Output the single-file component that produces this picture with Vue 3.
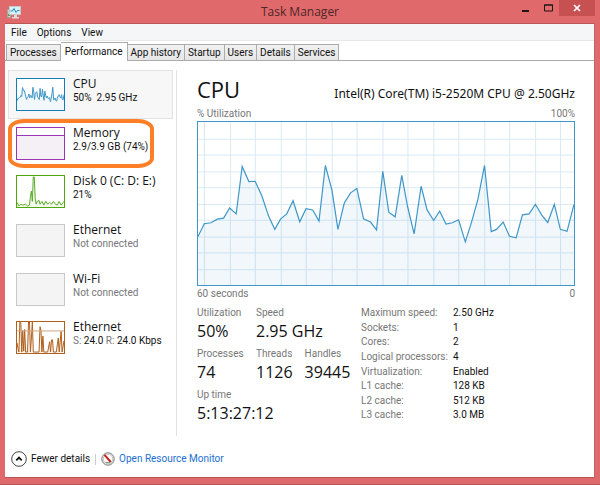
<script setup>
import { ref } from 'vue'

const menus = ['File', 'Options', 'View']
const tabs = ['Processes', 'Performance', 'App history', 'Startup', 'Users', 'Details', 'Services']
const activeTab = ref('Performance')

const cpuLine =
  '0,116 6.3,103 13,102 19.3,98.3 25.7,97.3 31.7,87 38.3,93 44.3,45 51,60.3 57.3,60 64,74.7 70.7,95 77,108.7 82.7,98.3 89,93 95.3,79.7 102,101 108.3,87.7 115,89 121.3,100.3 127.7,44 134.3,69 140.3,108.7 146.7,82 153,71.7 159.3,67.3 166,98 173,101.3 179,109.3 185.3,50 191.3,91.3 197.7,96 204.3,54 210.3,86.3 216.7,113.3 223.7,65 229.7,89 236.3,99.7 242.3,90.3 248.7,103.3 255,102 261.3,99 268,121.3 274.3,101.3 280.7,78 287.3,44 294,111 299.3,108.7 306,101.3 312.3,115.7 319,117.3 325.3,94 332,93 338.3,83.3 344.7,94.3 350.7,101.7 357.3,83.3 363.3,108.7 370,110.7 377,83.3'
const diskLine =
  '0,28 2,32 4,30 6,31 9,30 11,32 13,31 14,22 15,16 16,27 17,1 18,1 19,24 20,30 21,27 23,26 24,30 26,27 28,31 30,27 32,30 34,28 36,30 38,27 40,30 42,31 44,27 46,31 49,27'
const netLine =
  '0,22 1,28 2,32 3,0 4,1 5,32 6,9 7,31 8,8 9,32 11,32 12,0 13,0 14,32 15,17 16,0 17,32 21,32 23,32 24,5 25,9 26,32 27,15 28,32 32,32 34,21 35,32 36,19 37,19 38,32 41,32 43,17 44,32 46,10 47,32 49,20'

const items = [
  { name: 'CPU', info: '50%  2.95 GHz', tone: 'cpu', line: cpuLine, box: '0 0 377 165', base: '377,165 0,165' },
  { name: 'Memory', info: '2.9/3.9 GB (74%)', tone: 'memory', line: '0,8 49,8', box: '0 0 49 33', base: '49,33 0,33', marked: true },
  { name: 'Disk 0 (C: D: E:)', info: '21%', tone: 'disk', line: diskLine, box: '0 0 49 33', base: '49,33 0,33' },
  { name: 'Ethernet', info: 'Not connected', tone: 'off' },
  { name: 'Wi-Fi', info: 'Not connected', tone: 'off' },
  { name: 'Ethernet', rate: ['24.0', '24.0 Kbps'], tone: 'net', line: netLine, box: '0 0 49 33', base: '49,33 0,33', rule: true }
]
const current = ref(0)

const gridX = Array.from({ length: 15 }, (_, i) => Math.round(6 + i * 25.5) + 0.5)
const gridY = Array.from({ length: 9 }, (_, i) => Math.round((i + 1) * 16.5) + 0.5)

const stats = [
  [['Utilization', '50%'], ['Speed', '2.95 GHz']],
  [['Processes', '74'], ['Threads', '1126'], ['Handles', '39445']],
  [['Up time', '5:13:27:12']]
]
const specs = [
  ['Maximum speed:', '2.50 GHz'],
  ['Sockets:', '1'],
  ['Cores:', '2'],
  ['Logical processors:', '4'],
  ['Virtualization:', 'Enabled'],
  ['L1 cache:', '128 KB'],
  ['L2 cache:', '512 KB'],
  ['L3 cache:', '3.0 MB']
]
</script>

<template>
  <div class="window">
    <header class="titlebar">
      <svg class="app-icon" width="14" height="13" viewBox="0 0 14 13">
        <rect x="0.5" y="3.5" width="3" height="8" fill="#c9ccc8" stroke="#a3a5a2" />
        <rect x="1" y="8" width="2" height="2" fill="#52a35c" />
        <rect x="2.5" y="0.5" width="11" height="8" fill="#d5f1fa" stroke="#c9c9c6" />
        <path d="M3.500 5h2l1.500-2.500 2 4 1.500-2h2" fill="none" stroke="#2787b8" />
        <path d="M7 9h3v2h2v1.500H5V11h2z" fill="#d8dcdc" />
      </svg>
      <h1>Task Manager</h1>
      <div class="controls">
        <button aria-label="Minimize"><svg width="8" height="8"><path d="M0 6h7v2H0z" fill="#1d1414" /></svg></button>
        <button aria-label="Maximize"><svg width="9" height="8"><path d="M0.500 1h8v6h-8z" fill="none" stroke="#1d1414" /><path d="M0 0.500h9v1H0z" fill="#1d1414" /></svg></button>
        <button class="close" aria-label="Close"><svg width="8" height="8"><path d="M1 1l6 6M7 1L1 7" stroke="#fff" stroke-width="1.700" /></svg></button>
      </div>
    </header>

    <div class="client">
      <nav class="menu">
        <button v-for="m in menus" :key="m">{{ m }}</button>
      </nav>
      <div class="tabs" role="tablist">
        <button
          v-for="t in tabs"
          :key="t"
          role="tab"
          :aria-selected="t === activeTab"
          :class="{ active: t === activeTab }"
          @click="activeTab = t"
        >{{ t }}</button>
      </div>

      <main class="panel">
        <aside class="sidebar">
          <div class="list">
            <button
              v-for="(item, i) in items"
              :key="i"
              class="item"
              :class="[item.tone, { selected: i === current }]"
              @click="current = i"
            >
              <svg class="thumb" :viewBox="item.box" preserveAspectRatio="none">
                <polygon v-if="item.line" class="area" :points="item.line + ' ' + item.base" />
                <polyline v-if="item.line" class="line" :points="item.line" />
                <path v-if="item.rule" class="rule" d="M0 9.500h49" />
              </svg>
              <span class="text">
                <span class="name">{{ item.name }}</span>
                <span v-if="item.rate" class="info"><i>S:</i> {{ item.rate[0] }} <i>R:</i> {{ item.rate[1] }}</span>
                <span v-else class="info">{{ item.info }}</span>
              </span>
              <span v-if="item.marked" class="marker"></span>
            </button>
          </div>
        </aside>

        <section class="details">
          <div class="heading">
            <h2>CPU</h2>
            <span class="model">Intel(R) Core(TM) i5-2520M CPU @ 2.50GHz</span>
          </div>
          <div class="caption"><span>% Utilization</span><span>100%</span></div>
          <svg class="chart" viewBox="0 0 377 165" preserveAspectRatio="none">
            <path v-for="x in gridX" :key="'x' + x" class="grid" :d="`M${x} 0V165`" />
            <path v-for="y in gridY" :key="'y' + y" class="grid" :d="`M0 ${y}H377`" />
            <polygon class="area" :points="cpuLine + ' 377,165 0,165'" />
            <polyline class="line" :points="cpuLine" />
          </svg>
          <div class="caption below"><span>60 seconds</span><span>0</span></div>

          <div class="figures">
            <div class="stats">
              <div v-for="(row, r) in stats" :key="r" class="stat-row">
                <div v-for="s in row" :key="s[0]" class="stat">
                  <span class="label">{{ s[0] }}</span>
                  <span class="value">{{ s[1] }}</span>
                </div>
              </div>
            </div>
            <dl class="specs">
              <template v-for="s in specs" :key="s[0]">
                <dt>{{ s[0] }}</dt>
                <dd>{{ s[1] }}</dd>
              </template>
            </dl>
          </div>
        </section>
      </main>

      <footer class="footer">
        <button class="fewer">
          <svg width="16" height="16" viewBox="0 0 16 16">
            <circle cx="8" cy="8" r="7.300" fill="#fff" stroke="#444" />
            <path d="M5.300 9.300L8 6.600l2.700 2.700" fill="none" stroke="#111" stroke-width="1.800" />
          </svg>
          Fewer details
        </button>
        <span class="divider"></span>
        <a href="#">
          <svg width="14" height="14" viewBox="0 0 14 14">
            <circle cx="7" cy="7" r="6.200" fill="#f4f4f2" stroke="#777" />
            <circle cx="7" cy="7" r="4.800" fill="#fff" stroke="#c4c4bd" />
            <path d="M3.500 2.800L9.800 10" stroke="#c8201c" stroke-width="2" />
            <path d="M4.500 10.500h5" stroke="#8b9a8b" />
          </svg>
          Open Resource Monitor
        </a>
      </footer>
    </div>
  </div>
</template>

<style>
body {
  margin: 0;
}
</style>

<style scoped>
.window {
  box-sizing: border-box;
  min-height: 100vh;
  display: flex;
  flex-direction: column;
  padding: 0 5px 6px;
  background: #e0696b;
  border-bottom: 1px solid #b85557;
  font-family: Roboto, "Open Sans", sans-serif;
  font-size: 10px;
  line-height: 14px;
  color: #111;
}
button {
  margin: 0;
  padding: 0;
  border: 0;
  background: none;
  font: inherit;
  color: inherit;
  text-align: left;
}
svg {
  display: block;
  flex: none;
}
h1,
h2,
.name,
.value {
  font-family: "Open Sans", "Noto Sans", sans-serif;
}
.titlebar {
  display: grid;
  grid-template-columns: 1fr auto 1fr;
  height: 23px;
}
.app-icon {
  margin: 6px 0 0 2px;
}
h1 {
  margin: 0;
  padding-top: 1px;
  font-size: 12px;
  line-height: 22px;
  font-weight: 400;
  color: #4b2728;
}
.controls {
  display: flex;
  justify-content: flex-end;
  height: 16px;
}
.controls button {
  width: 22px;
  display: grid;
  place-items: center;
}
.controls .close {
  width: 36px;
  background: #c75050;
}
.client {
  flex: 1;
  display: flex;
  flex-direction: column;
  background: #fff;
  border-top: 1px solid #bd5557;
  border-right: 1px solid #c85f61;
  border-bottom: 1px solid #bd5557;
}
.menu {
  display: flex;
  gap: 10px;
  height: 15px;
  padding: 1px 6px 0;
  background: #f5f6f7;
  border-bottom: 1px solid #e8e8e9;
}
.tabs {
  display: flex;
  align-items: flex-end;
  height: 19px;
  padding: 1px 0 0 1px;
  box-shadow: inset 0 -1px #aaa;
}
.tabs button {
  height: 17px;
  padding: 0 3px;
  line-height: 16px;
  box-sizing: border-box;
  border: 1px solid #acacac;
  border-left-width: 0;
  background: linear-gradient(#f1f1f1, #e6e6e6);
}
.tabs button:first-child {
  border-left-width: 1px;
}
.tabs .active {
  height: 19px;
  padding: 0 4px;
  background: #fff;
  border-bottom: 0;
}
.panel {
  flex: 1;
  display: flex;
  padding-top: 9px;
}
.sidebar {
  width: 172px;
  flex: none;
  padding-left: 3px;
  box-sizing: border-box;
  border-right: 1px solid #e2e2e2;
}
.list {
  display: grid;
  grid-auto-rows: 1fr;
  min-height: 292px;
  margin-right: 3px;
}
.item {
  position: relative;
  display: flex;
  gap: 8px;
  padding: 7px 7px 6px;
  border: 1px solid transparent;
}
.selected {
  background: #f7f7f7;
  border-color: #e3e3e3;
}
.thumb {
  width: 49px;
  height: 33px;
  box-sizing: border-box;
  border: 1px solid #117dbb;
  background: #fff;
}
.text {
  display: flex;
  flex-direction: column;
}
.name {
  margin-top: -2px;
  font-size: 12px;
  line-height: 16px;
}
.info {
  white-space: pre;
  line-height: 12px;
}
.info i,
.off .info {
  font-style: normal;
  color: #777;
}
.line,
.rule {
  fill: none;
  stroke: #3e97c8;
  stroke-width: 1;
  vector-effect: non-scaling-stroke;
}
.chart .line {
  stroke-width: 1.2;
}
.area {
  fill: #1177bb;
  fill-opacity: 0.06;
}
.memory .thumb {
  border-color: #9b35b5;
}
.memory .line {
  stroke: #9b35b5;
}
.memory .area {
  fill: #f4f0f6;
  fill-opacity: 1;
}
.disk .thumb {
  border-color: #4da60c;
}
.disk .line {
  stroke: #5aac24;
}
.disk .area {
  fill: #4da60c;
}
.off .thumb {
  border-color: #c8c8c8;
  background: #f4f4f4;
}
.net .thumb {
  border-color: #b0601c;
}
.net .line {
  stroke: #b0601c;
}
.net .rule {
  stroke: #cfa680;
}
.net .area {
  fill: #b0601c;
}
.marker {
  position: absolute;
  top: -1px;
  left: -1px;
  width: 146px;
  height: 49px;
  box-sizing: border-box;
  border: 4px solid #ff7f27;
  border-radius: 16px / 10px;
  pointer-events: none;
}
.details {
  flex: 1;
  min-width: 0;
  padding: 4px 19px 0 20px;
}
.heading {
  display: flex;
  justify-content: space-between;
  align-items: baseline;
  height: 34px;
}
h2 {
  margin: 0;
  font-size: 22px;
  line-height: 31px;
  font-weight: 400;
}
.model {
  font-family: "Noto Sans", "Open Sans", sans-serif;
  font-size: 12px;
}
.caption {
  display: flex;
  justify-content: space-between;
  height: 13px;
  line-height: 12px;
  color: #777;
}
.chart {
  width: 100%;
  height: 165px;
  box-sizing: border-box;
  border: 1px solid #3e97c8;
}
.grid {
  stroke: #d9eaf4;
  vector-effect: non-scaling-stroke;
}
.below {
  padding-top: 2px;
}
.figures {
  display: flex;
  padding-top: 5px;
}
.stats {
  width: 164px;
  flex: none;
}
.stat-row {
  display: flex;
  gap: 12px;
  height: 41px;
}
.stat {
  display: flex;
  flex-direction: column;
}
.stat:first-child {
  min-width: 47px;
}
.label,
.specs dt {
  color: #777;
}
.value {
  font-size: 16px;
  line-height: 22px;
}
.specs {
  margin: 0;
  display: grid;
  grid-template-columns: 92px auto;
  grid-auto-rows: 1fr;
  height: 117px;
}
.specs dd {
  margin: 0;
}
.footer {
  display: flex;
  align-items: center;
  box-sizing: border-box;
  height: 41px;
  padding: 5px 6px 0;
}
.fewer,
.footer a {
  display: flex;
  align-items: center;
  gap: 4px;
}
.divider {
  width: 1px;
  height: 11px;
  margin: 0 5px;
  background: #ccc;
}
.footer a {
  color: #1a70d2;
  text-decoration: none;
}
</style>
